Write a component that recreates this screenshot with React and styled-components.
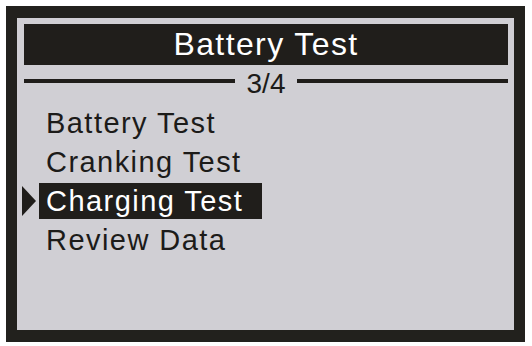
import React from "react";
import styled, { createGlobalStyle } from "styled-components";

const GlobalStyle = createGlobalStyle`
	html, body {
		margin: 0;
		padding: 0;
		background: #ffffff;
	}
	body {
		font-family: "Liberation Sans", Arial, Helvetica, sans-serif;
	}
`

const Frame = styled.div`
	margin: 6px 0 0 6px;
	width: 519px;
	height: 336px;
	box-sizing: border-box;
	border-style: solid;
	border-color: #22211d;
	border-width: 12px 11px;
	background: #22211d;
`

const Screen = styled.div`
	height: 100%;
	box-sizing: border-box;
	background: #d0cfd4;
	padding: 6px 6px 0 7px;
	display: flex;
	flex-direction: column;
	color: #1c1b19;
	font-family: "Liberation Sans", Arial, Helvetica, sans-serif;
`

const TitleBar = styled.div`
	height: 41px;
	background: #201e1b;
	color: #ffffff;
	font-size: 32px;
	line-height: 41px;
	letter-spacing: 1.4px;
	text-align: center;
`

const PageRow = styled.div`
	margin-top: 3px;
	height: 32px;
	display: flex;
	align-items: flex-start;
	gap: 12px;
`

const Rule = styled.div`
	flex: 1;
	height: 4px;
	margin-top: 11px;
	background: #1f1d1a;
`

const PageNumber = styled.span`
	font-size: 28px;
	line-height: 32px;
`

const Menu = styled.ul`
	list-style: none;
	margin: 5px 0 0 -2px;
	padding: 0;
	display: flex;
	flex-direction: column;
	gap: 3px;
`

const Item = styled.li`
	display: flex;
	align-items: center;
	height: 36px;
`

const Pointer = styled.span`
	width: 17px;
	height: 36px;
	display: flex;
	align-items: center;
	svg {
		display: block;
	}
`

const Label = styled.span`
	width: 223px;
	height: 36px;
	box-sizing: border-box;
	padding-left: 7px;
	font-size: 29px;
	line-height: 36px;
	letter-spacing: 1.45px;
	white-space: nowrap;
	background: ${p => (p.$active ? "#201e1b" : "transparent")};
	color: ${p => (p.$active ? "#ffffff" : "#1c1b19")};
`

const items = ["Battery Test", "Cranking Test", "Charging Test", "Review Data"];
const selected = 2;

const App = () => (
	<>
		<GlobalStyle />
		<Frame>
			<Screen>
				<TitleBar>Battery Test</TitleBar>
				<PageRow>
					<Rule />
					<PageNumber>3/4</PageNumber>
					<Rule />
				</PageRow>
				<Menu>
					{items.map((name, i) => (
						<Item key={name}>
							<Pointer>
								{i === selected && (
									<svg width="14" height="30" viewBox="0 0 14 30">
										<polygon points="0,0 14,15 0,30" fill="#1f1d1a" />
									</svg>
								)}
							</Pointer>
							<Label $active={i === selected}>{name}</Label>
						</Item>
					))}
				</Menu>
			</Screen>
		</Frame>
	</>
);

export default App;
